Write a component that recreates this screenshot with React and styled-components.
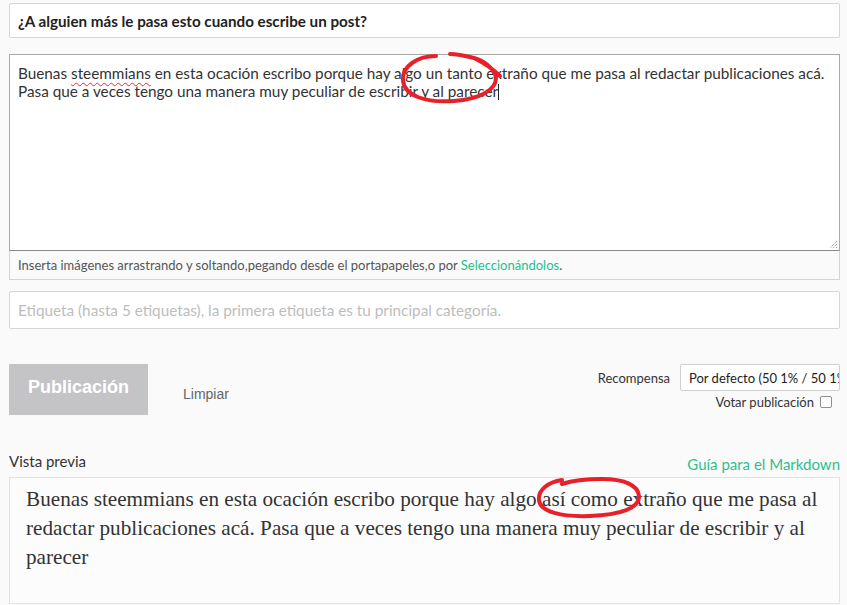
import React from "react";
import styled, { createGlobalStyle } from "styled-components";

const GlobalStyle = createGlobalStyle`
  html, body {
    margin: 0;
    padding: 0;
    background: #fafafa;
  }
  * { box-sizing: border-box; }
`;

const Page = styled.div`
  position: relative;
  width: 847px;
  height: 605px;
  overflow: hidden;
  padding: 3px 7px 0 9px;
  font-family: "Lato", "Liberation Sans", sans-serif;
  color: #333;
`;

const TitleInput = styled.div`
  height: 35px;
  background: #fff;
  border: 1px solid #d6d6d6;
  border-radius: 2px;
  padding: 0 8px;
  display: flex;
  align-items: center;
  font-size: 15.2px;
  font-weight: 700;
  color: #222;
`;

const EditorBox = styled.div`
  margin-top: 16px;
  display: flex;
  flex-direction: column;
`;

const TextArea = styled.div`
  position: relative;
  height: 197px;
  background: #fff;
  border: 1px solid #a9a9a9;
  border-bottom-color: #8a8a8a;
  padding: 9px 8px;
  font-size: 15.3px;
  line-height: 18px;
  color: #333;
`;

const Squiggle = styled.span`
  text-decoration: underline wavy #e0303a;
  text-decoration-thickness: 1px;
  text-underline-offset: 3px;
`;

const Caret = styled.span`
  display: inline-block;
  width: 1px;
  height: 16px;
  background: #222;
  vertical-align: -3px;
`;

const Grip = styled.svg`
  position: absolute;
  right: 1px;
  bottom: 1px;
`;

const HelpBar = styled.div`
  height: 29px;
  border: 1px solid #d4d4d4;
  border-top: none;
  background: #fafafa;
  padding: 0 8px;
  display: flex;
  align-items: center;
  font-size: 13px;
  color: #555;
`;

const Link = styled.span`
  color: #1ebf8d;
`;

const TagInput = styled.div`
  margin-top: 11px;
  height: 38px;
  background: #fff;
  border: 1px solid #d6d6d6;
  border-radius: 2px;
  padding: 0 8px;
  display: flex;
  align-items: center;
  font-size: 15.3px;
  color: #bdbdbd;
`;

const ActionRow = styled.div`
  margin-top: 35px;
  display: flex;
  justify-content: space-between;
  align-items: flex-start;
`;

const Buttons = styled.div`
  display: flex;
  align-items: center;
`;

const PublishButton = styled.div`
  width: 139px;
  height: 51px;
  background: #c4c4c6;
  color: #fff;
  font-family: "Liberation Sans", Arial, sans-serif;
  font-weight: 700;
  font-size: 18px;
  display: flex;
  align-items: center;
  justify-content: center;
  padding-bottom: 4px;
`;

const ClearButton = styled.div`
  margin-left: 35px;
  margin-top: 8px;
  font-family: "Liberation Sans", Arial, sans-serif;
  font-size: 14px;
  color: #666;
`;

const Options = styled.div`
  display: flex;
  flex-direction: column;
  align-items: flex-end;
`;

const RewardRow = styled.div`
  display: flex;
  align-items: center;
  gap: 10px;
  font-size: 13px;
  color: #333;
`;

const Select = styled.div`
  width: 160px;
  height: 27px;
  background: #fff;
  border: 1px solid #cfcfcf;
  border-radius: 2px;
  padding: 0 8px;
  display: flex;
  align-items: center;
  white-space: nowrap;
  overflow: hidden;
  text-overflow: clip;
  font-size: 13px;
  color: #222;
`;

const VoteRow = styled.label`
  margin-top: 3px;
  margin-right: 8px;
  display: flex;
  align-items: center;
  gap: 6px;
  font-size: 13px;
  color: #333;
`;

const Check = styled.span`
  width: 12px;
  height: 12px;
  border: 1px solid #8f8f8f;
  border-radius: 2px;
  background: #fff;
`;

const PreviewHeader = styled.div`
  margin-top: 37px;
  display: flex;
  justify-content: space-between;
  align-items: flex-end;
  height: 25px;
`;

const PreviewLabel = styled.div`
  font-size: 15px;
  color: #333;
  padding-bottom: 7px;
`;

const GuideLink = styled.div`
  font-size: 15px;
  color: #2fbf90;
  padding-bottom: 4px;
`;

const PreviewBox = styled.div`
  height: 127px;
  background: #fcfcfc;
  border: 1px solid #e2e2e2;
  padding: 7px 15px 7px 16px;
  font-family: "Liberation Serif", "DejaVu Serif", serif;
  font-size: 21.2px;
  line-height: 29px;
  color: #333;
`;

const Annotation = styled.svg`
  position: absolute;
  left: ${(p) => p.$x}px;
  top: ${(p) => p.$y}px;
  pointer-events: none;
`;

export default function App() {
  return (
    <Page>
      <GlobalStyle />
      <TitleInput>¿A alguien más le pasa esto cuando escribe un post?</TitleInput>

      <EditorBox>
        <TextArea>
          Buenas <Squiggle>steemmians</Squiggle> en esta ocación escribo porque hay algo un tanto
          extraño que me pasa al redactar publicaciones acá.
          <br />
          Pasa que a veces tengo una manera muy peculiar de escribir y al parecer
          <Caret />
          <Grip width="10" height="10" viewBox="0 0 10 10">
            <path d="M9 2 L2 9 M9 5 L5 9 M9 8 L8 9" stroke="#777" strokeWidth="1" strokeDasharray="1 1" />
          </Grip>
        </TextArea>
        <HelpBar>
          Inserta imágenes arrastrando y soltando,pegando desde el portapapeles,o por&nbsp;
          <Link>Seleccionándolos</Link>.
        </HelpBar>
      </EditorBox>

      <TagInput>Etiqueta (hasta 5 etiquetas), la primera etiqueta es tu principal categoría.</TagInput>

      <ActionRow>
        <Buttons>
          <PublishButton>Publicación</PublishButton>
          <ClearButton>Limpiar</ClearButton>
        </Buttons>
        <Options>
          <RewardRow>
            Recompensa
            <Select>Por defecto (50 1% / 50 1%)</Select>
          </RewardRow>
          <VoteRow>
            Votar publicación
            <Check />
          </VoteRow>
        </Options>
      </ActionRow>

      <PreviewHeader>
        <PreviewLabel>Vista previa</PreviewLabel>
        <GuideLink>Guía para el Markdown</GuideLink>
      </PreviewHeader>
      <PreviewBox>
        Buenas steemmians en esta ocación escribo porque hay algo así como extraño que me pasa al
        redactar publicaciones acá. Pasa que a veces tengo una manera muy peculiar de escribir y al
        parecer
      </PreviewBox>

      <Annotation $x={396} $y={48} width="110" height="60" viewBox="0 0 110 60">
        <path
          d="M40 8 C22 8 6 18 7 32 C8 48 30 55 58 53 C84 51 100 42 100 30 C99 20 86 12 78 10 C70 8 62 6 54 6 M78 10 C88 15 98 22 104 28"
          fill="none"
          stroke="#e8202a"
          strokeWidth="4"
          strokeLinecap="round"
        />
      </Annotation>
      <Annotation $x={532} $y={474} width="115" height="48" viewBox="0 0 115 48">
        <path
          d="M30 6 C16 8 6 16 7 26 C8 38 30 43 58 42 C88 41 108 34 107 22 C106 11 92 5 70 5 C55 5 42 6 30 10"
          fill="none"
          stroke="#e8202a"
          strokeWidth="4"
          strokeLinecap="round"
        />
      </Annotation>
    </Page>
  );
}
